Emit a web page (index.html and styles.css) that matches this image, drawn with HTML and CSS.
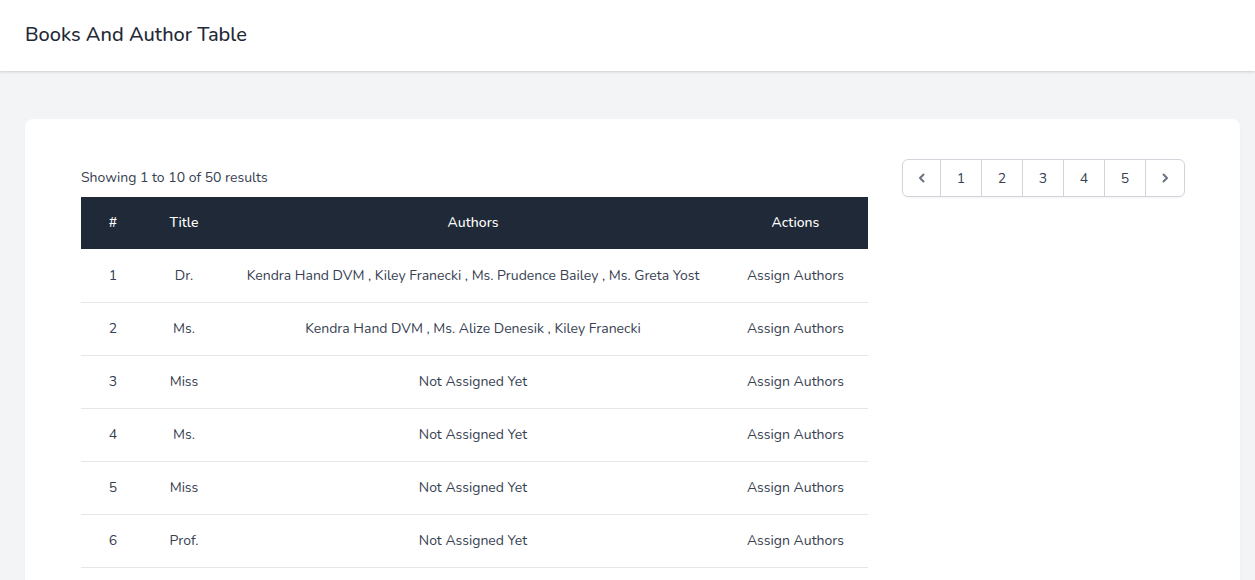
FILE: index.html
```html
<!DOCTYPE html>
<html>
<head>
<meta charset="utf-8">
<link rel="stylesheet" href="styles.css">
</head>
<body>
<header class="topbar">
  <h2 class="page-title">Books And Author Table</h2>
</header>
<main class="main">
  <div class="card">
    <div class="left">
      <p class="summary">Showing 1 to 10 of 50 results</p>
      <table class="books">
        <colgroup>
          <col class="c-num"><col class="c-title"><col class="c-authors"><col class="c-actions">
        </colgroup>
        <thead>
          <tr><th>#</th><th>Title</th><th>Authors</th><th>Actions</th></tr>
        </thead>
        <tbody>
          <tr><td>1</td><td>Dr.</td><td>Kendra Hand DVM , Kiley Franecki , Ms. Prudence Bailey , Ms. Greta Yost</td><td>Assign Authors</td></tr>
          <tr><td>2</td><td>Ms.</td><td>Kendra Hand DVM , Ms. Alize Denesik , Kiley Franecki</td><td>Assign Authors</td></tr>
          <tr><td>3</td><td>Miss</td><td>Not Assigned Yet</td><td>Assign Authors</td></tr>
          <tr><td>4</td><td>Ms.</td><td>Not Assigned Yet</td><td>Assign Authors</td></tr>
          <tr><td>5</td><td>Miss</td><td>Not Assigned Yet</td><td>Assign Authors</td></tr>
          <tr><td>6</td><td>Prof.</td><td>Not Assigned Yet</td><td>Assign Authors</td></tr>
        </tbody>
      </table>
    </div>
    <nav class="pager">
      <span class="pg pg-arrow"><svg width="12" height="12" viewBox="0 0 12 12"><path d="M7.5 2.5L4 6l3.5 3.5" fill="none" stroke="currentColor" stroke-width="2" stroke-linecap="round" stroke-linejoin="round"/></svg></span>
      <span class="pg">1</span>
      <span class="pg">2</span>
      <span class="pg">3</span>
      <span class="pg">4</span>
      <span class="pg">5</span>
      <span class="pg pg-arrow pg-last"><svg width="12" height="12" viewBox="0 0 12 12"><path d="M4.5 2.5L8 6 4.5 9.5" fill="none" stroke="currentColor" stroke-width="2" stroke-linecap="round" stroke-linejoin="round"/></svg></span>
    </nav>
  </div>
</main>
</body>
</html>
```
FILE: styles.css
```css
* { box-sizing: border-box; }
html, body { margin: 0; padding: 0; }
body {
  font-family: "Nunito", "Lato", "Noto Sans", sans-serif;
  background: #f3f4f6;
  color: #374151;
  font-size: 14px;
}
.topbar {
  background: #fff;
  height: 71px;
  padding: 0 25px 2px;
  display: flex;
  align-items: center;
  box-shadow: 0 1px 3px rgba(0,0,0,0.1), 0 1px 2px rgba(0,0,0,0.06);
  position: relative;
}
.page-title {
  margin: 0;
  font-size: 20px;
  font-weight: 500;
  color: #1f2937;
  line-height: 28px;
}
.main {
  padding: 48px 15px 0 25px;
}
.card {
  background: #fff;
  border-radius: 8px;
  padding: 40px 55px 40px 56px;
  display: flex;
  justify-content: space-between;
  align-items: flex-start;
  box-shadow: 0 1px 2px rgba(0,0,0,0.03);
}
.left { width: 787px; }
.summary {
  margin: 9px 0 9px;
  line-height: 20px;
  font-size: 14px;
  color: #374151;
}
.books {
  border-collapse: collapse;
  table-layout: fixed;
  width: 787px;
}
.c-num { width: 64px; }
.c-title { width: 78px; }
.c-authors { width: 500px; }
.c-actions { width: 145px; }
.books th {
  background: #1f2937;
  color: #fff;
  font-weight: 500;
  font-size: 14px;
  height: 52px;
  text-align: center;
  padding: 0 0 2px;
}
.books td {
  height: 53px;
  text-align: center;
  border-bottom: 1px solid #e5e7eb;
  color: #374151;
  padding: 0;
  white-space: nowrap;
}
.pager {
  display: flex;
  border: 1px solid #d1d5db;
  border-radius: 6px;
  box-shadow: 0 1px 2px rgba(0,0,0,0.05);
  height: 38px;
  overflow: hidden;
}
.pg {
  width: 41px;
  display: flex;
  align-items: center;
  justify-content: center;
  border-right: 1px solid #d1d5db;
  color: #374151;
  font-size: 14px;
}
.pg-arrow { width: 38px; color: #6b7280; }
.pg-last { border-right: none; }
```
